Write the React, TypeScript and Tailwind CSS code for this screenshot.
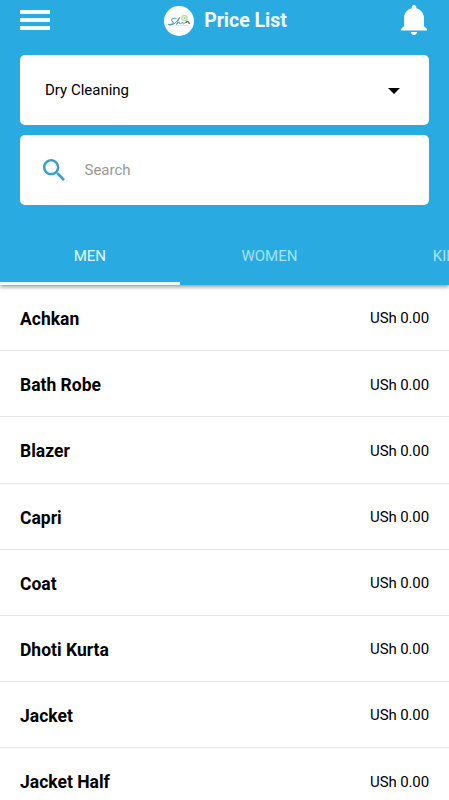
const items = ['Achkan', 'Bath Robe', 'Blazer', 'Capri', 'Coat', 'Dhoti Kurta', 'Jacket', 'Jacket Half'];

function Logo() {
  return (
    <svg className="h-[30px] w-[30px]" viewBox="0 0 30 30" fill="none">
      <circle cx="15" cy="15" r="15" fill="#fff" />
      <circle cx="20.5" cy="12" r="2.600" stroke="#c3dfa0" strokeWidth="1.500" />
      <circle cx="20.5" cy="12" r="1" fill="#8cc7a0" />
      <path d="M12.500 12.500C9 11.500 6 13.500 8.500 15.500C10.500 17 9 19 4 18.500" stroke="#5ba7bd" strokeWidth="1.100" />
      <path d="M5 19C10 19 13 16 15.500 11.500L12.500 18.500C14.500 16 16 15.500 15.500 17.500C17 18.500 18 16 19 16.500C18.500 18.500 20.500 18 21 16.500" stroke="#4d9cac" strokeWidth="1" />
      <path d="M21.500 17L23 15.500L24.500 16L25.500 18" stroke="#55656b" strokeWidth="1.300" />
      <path d="M11 19.500H24" stroke="#c2dde2" strokeWidth=".6" />
    </svg>
  );
}

function Bell() {
  return (
    <svg className="h-[30px] w-[26px]" viewBox="80 48 352 416" preserveAspectRatio="none" fill="#fff">
      <path d="M256 464c22.779 0 41.411-18.719 41.411-41.6h-82.823c0 22.881 18.633 41.6 41.412 41.6zm134.589-124.8V224.8c0-63.44-44.516-117.518-103.53-131.041V79.2c0-17.682-13.457-31.2-31.059-31.2s-31.059 13.518-31.059 31.2v14.559c-59.015 13.523-103.53 67.601-103.53 131.041v114.4L80 380.8v20.8h352v-20.8l-41.411-41.6z" />
    </svg>
  );
}

function SearchIcon() {
  return (
    <svg className="h-[22px] w-[22px] shrink-0" viewBox="64 64 384 384" fill="#3a9fcd">
      <path d="M337.509 305.372h-17.501l-6.571-5.486c20.791-25.232 33.922-57.054 33.922-93.257C347.358 127.632 283.896 64 205.135 64 127.452 64 64 127.632 64 206.629s63.452 142.628 142.225 142.628c35.011 0 67.831-13.167 92.991-34.008l6.561 5.487v17.551L415.18 448 448 415.086 337.509 305.372zm-131.284 0c-54.702 0-98.463-43.887-98.463-98.743 0-54.858 43.761-98.742 98.463-98.742 54.7 0 98.462 43.884 98.462 98.742 0 54.856-43.762 98.743-98.462 98.743z" />
    </svg>
  );
}

export default function App() {
  return (
    <div className="flex h-[800px] w-full flex-col overflow-hidden bg-white font-['Roboto',sans-serif] text-black">
      <header className="relative z-10 h-[285px] shrink-0 bg-[#29abe2] shadow-[0_2px_4px_rgba(0,0,0,0.4)]">
        <div className="flex h-[55px] items-start justify-between pr-[22px] pl-5 pt-[5px]">
          <button aria-label="Menu" className="mt-[5px] flex w-[30px] flex-col gap-[4.5px]">
            <span className="h-[3.7px] w-full bg-[#effdff]" />
            <span className="h-[3.7px] w-full bg-[#effdff]" />
            <span className="h-[3.7px] w-full bg-[#effdff]" />
          </button>
          <div className="flex items-center gap-[10px]">
            <Logo />
            <h1 className="pt-px text-[19.500px] leading-[30px] font-bold text-[#f4fdff]">Price List</h1>
          </div>
          <button aria-label="Notifications"><Bell /></button>
        </div>
        <div className="mx-5 flex flex-col gap-[10px]">
          <div className="flex h-[70px] items-center justify-between rounded-[5px] bg-white pr-[29px] pl-[25px]">
            <span className="text-[15px]">Dry Cleaning</span>
            <svg className="mt-px h-[6px] w-3" viewBox="0 0 12 6"><path d="M0 0H12L6 6Z" /></svg>
          </div>
          <div className="flex h-[70px] items-center rounded-[5px] bg-white pl-[23px]">
            <SearchIcon />
            <span className="ml-[19.500px] text-[15px] text-[#999]">Search</span>
          </div>
        </div>
        <nav className="flex h-20 overflow-hidden text-[15px]">
          <div className="flex w-[179.600px] shrink-0 items-center justify-center border-b-[3px] border-[#f2fcff] pt-[25px] text-[#e4faff]">MEN</div>
          <div className="flex w-[179.600px] shrink-0 items-center justify-center pt-[22px] text-[#a5e3f7]">WOMEN</div>
          <div className="flex w-[179.600px] shrink-0 items-center justify-center pt-[22px] text-[#a5e3f7]">KIDS</div>
        </nav>
      </header>
      <main>
        {items.map((item) => (
          <div key={item} className="flex h-[66.2px] items-center justify-between border-b border-[#e6e6e6] px-5 pt-[2px]">
            <span className="pt-px text-[17.500px] font-bold">{item}</span>
            <span className="text-[15px] tracking-[-0.12px]">USh 0.00</span>
          </div>
        ))}
      </main>
    </div>
  );
}
